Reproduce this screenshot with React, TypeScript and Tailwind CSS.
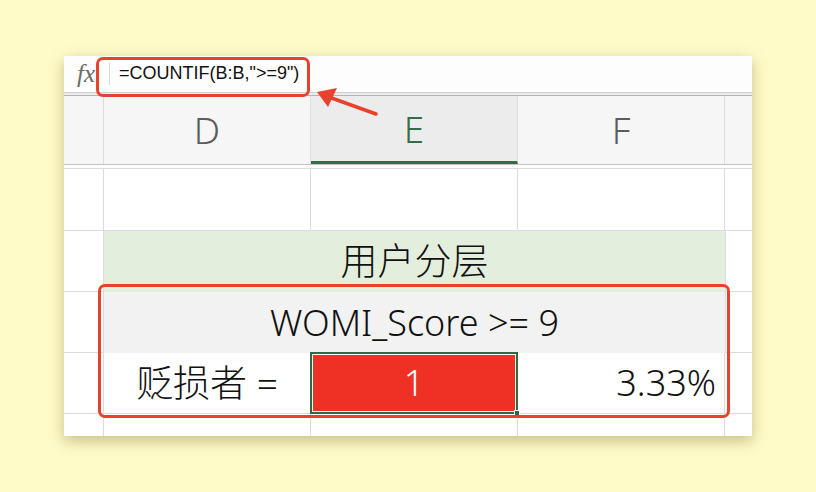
import React from 'react';

const cellFont = { fontFamily: '"Noto Sans", "Noto Sans CJK SC", sans-serif' };

function App() {
  return (
    <div className="w-[816px] h-[492px] bg-[#fffbc9] pl-[64px] pt-[56px] overflow-hidden">
      <div className="relative w-[688px] h-[380px] bg-white shadow-[0_5px_14px_rgba(90,80,0,0.35)] flex flex-col">
        {/* formula bar */}
        <div className="h-[36px] flex items-center bg-[#fdfdfd]">
          <span
            className="w-[40px] pl-[13px] text-[25px] italic text-[#6a6a6a] leading-none"
            style={{ fontFamily: '"Liberation Serif", serif' }}
          >
            fx
          </span>
          <span className="ml-[5px] w-px h-[22px] bg-[#d8d8d8]" />
          <span
            className="ml-[9px] text-[18px] text-[#111]"
            style={{ fontFamily: '"Liberation Sans", sans-serif' }}
          >
            =COUNTIF(B:B,"&gt;=9")
          </span>
        </div>
        <div className="h-[4px] border-t border-t-[#cfcfcf] border-b border-b-[#b4b4b4] bg-[#ececec]" />

        {/* column headers */}
        <div
          className="grid grid-cols-[40px_207px_207px_207px_27px] h-[70px] bg-[#f6f6f6] border-b border-[#c4c4c4] text-[37px] font-light text-[#5c5c5c]"
          style={cellFont}
        >
          <div className="border-r border-[#dcdcdc]" />
          <div className="border-r border-[#dcdcdc] flex items-center justify-center">D</div>
          <div className="border-r border-[#dcdcdc] bg-[#ececec] border-b-[3px] border-b-[#2f6f45] flex items-center justify-center text-[#2f6f45]">
            E
          </div>
          <div className="border-r border-[#dcdcdc] flex items-center justify-center">F</div>
          <div />
        </div>
        <div className="h-[3px]" />

        {/* rows */}
        <div
          className="grid grid-cols-[40px_207px_207px_207px_27px] grid-rows-[62px_61px_61px_61px_22px] border-t border-[#dcdcdc] text-[#111]"
          style={cellFont}
        >
          {/* row 1 */}
          <div className="border-r border-b border-[#dcdcdc]" />
          <div className="border-r border-b border-[#dcdcdc]" />
          <div className="border-r border-b border-[#dcdcdc]" />
          <div className="border-r border-b border-[#dcdcdc]" />
          <div className="border-b border-[#dcdcdc]" />

          {/* row 2 */}
          <div className="border-r border-b border-[#dcdcdc]" />
          <div className="col-span-3 bg-[#e3efdc] flex items-center justify-center text-[37px] font-light pb-[2px]">
            用户分层
          </div>
          <div className="border-l border-b border-[#dcdcdc]" />

          {/* row 3 */}
          <div className="border-r border-b border-[#dcdcdc]" />
          <div className="col-span-3 bg-[#f2f2f2] flex items-center justify-center text-[36px] font-light">
            WOMI_Score &gt;= 9
          </div>
          <div className="border-l border-b border-[#dcdcdc]" />

          {/* row 4 */}
          <div className="border-r border-b border-[#dcdcdc]" />
          <div className="border-r border-b border-[#dcdcdc] flex items-center justify-center text-[37px] font-light">
            贬损者 =
          </div>
          <div className="relative border-[2px] border-[#2f6a42] -ml-px -mt-px">
            <div className="h-full border border-white bg-[#ee3124] flex items-center justify-center text-white text-[36px] font-light">
              1
            </div>
            <div className="absolute -right-[4px] -bottom-[4px] w-[6px] h-[6px] bg-[#2f6a42] border border-white" />
          </div>
          <div className="border-r border-b border-[#dcdcdc] flex items-center justify-end pr-[8px] text-[36px] font-light">
            3.33%
          </div>
          <div className="border-b border-[#dcdcdc]" />

          {/* row 5 */}
          <div className="border-r border-[#dcdcdc]" />
          <div className="border-r border-[#dcdcdc]" />
          <div className="border-r border-[#dcdcdc]" />
          <div className="border-r border-[#dcdcdc]" />
          <div />
        </div>

        {/* annotations */}
        <div className="absolute left-[32px] top-[1px] w-[214px] h-[40px] border-[3px] border-[#e8422c] rounded-[7px]" />
        <div className="absolute left-[34px] top-[228px] w-[632px] h-[134px] border-[3px] border-[#e8422c] rounded-[7px]" />
        <svg className="absolute left-[250px] top-[30px]" width="80" height="34" viewBox="0 0 80 34">
          <line x1="62" y1="28" x2="12" y2="10" stroke="#e8422c" strokeWidth="3.5" strokeLinecap="round" />
          <polygon points="3,6 23,2 14,21" fill="#e8422c" />
        </svg>
      </div>
    </div>
  );
}

export default App;
